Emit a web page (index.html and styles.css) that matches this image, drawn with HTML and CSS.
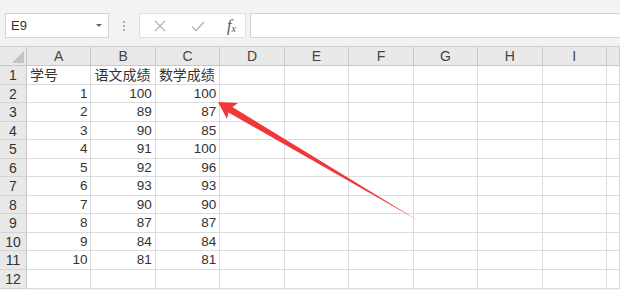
FILE: index.html
```html
<!DOCTYPE html>
<html lang="zh-CN">
<head>
    <meta charset="UTF-8">
    <link rel="stylesheet" href="styles.css">
    <title>表格</title>
</head>
<body>
    <!-- 编辑栏 -->
    <div class="toolbar">
        <div class="name-box">
            <span class="cell-ref">E9</span>
            <span class="caret"></span>
        </div>
        <div class="grip">
            <i></i><i></i><i></i>
        </div>
        <div class="fx-box">
            <svg class="tool-icon" width="14" height="14" viewBox="0 0 14 14">
                <path d="M2 2 L12 12 M12 2 L2 12" stroke="#b4b4b4" stroke-width="1.3" fill="none"/>
            </svg>
            <svg class="tool-icon" width="14" height="14" viewBox="0 0 14 14">
                <path d="M1 7.5 L5 11.5 L13 3" stroke="#b4b4b4" stroke-width="1.4" fill="none"/>
            </svg>
            <span class="fx">f<sub>x</sub></span>
        </div>
        <div class="formula-input"></div>
    </div>

    <!-- 工作表 -->
    <div class="sheet">
        <div class="grid" id="grid"></div>
        <svg class="arrow" width="620" height="290" viewBox="0 0 620 290">
            <polygon points="218,102 238,103 232.5,107 418,220.5 228.5,112.5 227,119" fill="#f0383a"/>
        </svg>
    </div>

    <script>
        var cols = ['A', 'B', 'C', 'D', 'E', 'F', 'G', 'H', 'I', ''];
        var data = [
            ['学号', '语文成绩', '数学成绩'],
            [1, 100, 100], [2, 89, 87], [3, 90, 85], [4, 91, 100], [5, 92, 96],
            [6, 93, 93], [7, 90, 90], [8, 87, 87], [9, 84, 84], [10, 81, 81],
            []
        ];
        var grid = document.getElementById('grid');
        var html = '<div class="corner"><span class="tri"></span></div>';
        cols.forEach(function(c) {
            html += '<div class="col-head">' + c + '</div>';
        });
        data.forEach(function(row, r) {
            html += '<div class="row-head">' + (r + 1) + '</div>';
            cols.forEach(function(c, i) {
                var v = row[i];
                if (v === undefined) {
                    html += '<div class="cell"></div>';
                } else if (typeof v === 'number') {
                    html += '<div class="cell num">' + v + '</div>';
                } else {
                    html += '<div class="cell text">' + v + '</div>';
                }
            });
        });
        grid.innerHTML = html;
    </script>
</body>
</html>
```

FILE: styles.css
```css
body {
    margin: 0;
    padding: 0;
    width: 620px;
    height: 290px;
    overflow: hidden;
    background: #f3f3f3;
    font-family: 'Liberation Sans', 'Noto Sans CJK SC', sans-serif;
    color: #333;
}

.toolbar {
    display: flex;
    align-items: center;
    height: 25px;
    padding: 13px 0 8px 5px;
    border-top: 2px solid #e6e6e6;
    box-sizing: content-box;
    margin-top: -2px;
}

.name-box {
    width: 100px;
    height: 23px;
    background: #fff;
    border: 1px solid #d4d4d4;
    display: flex;
    align-items: center;
    justify-content: space-between;
    padding: 0 6px 0 5px;
    box-sizing: content-box;
    margin-right: 0;
    width: 91px;
}
.cell-ref {
    font-size: 13px;
    color: #333;
}
.caret {
    width: 0;
    height: 0;
    border-left: 3px solid transparent;
    border-right: 3px solid transparent;
    border-top: 3px solid #666;
}

.grip {
    width: 30px;
    display: flex;
    flex-direction: column;
    align-items: center;
    gap: 2px;
}
.grip i {
    width: 2px;
    height: 2px;
    background: #b0b0b0;
}

.fx-box {
    width: 107px;
    height: 23px;
    background: #fff;
    border: 1px solid #e0e0e0;
    display: flex;
    align-items: center;
    padding-left: 13px;
    gap: 24px;
    box-sizing: border-box;
    height: 25px;
}
.fx {
    font-family: 'Liberation Serif', serif;
    font-style: italic;
    font-size: 16px;
    color: #555;
    margin-left: -2px;
}
.fx sub {
    font-size: 10px;
    vertical-align: -1px;
}

.formula-input {
    flex-grow: 1;
    height: 25px;
    margin-left: 4px;
    background: #fff;
    border: 1px solid #d4d4d4;
    border-right: none;
    box-sizing: border-box;
}

.sheet {
    position: relative;
    border-top: 1px solid #d0d0d0;
}

.grid {
    display: grid;
    grid-template-columns: 27px repeat(9, 64.45px) 1fr;
    grid-template-rows: 19px repeat(12, 18.55px);
    background: #fff;
}

.corner {
    background: #e9e9e9;
    border-right: 1px solid #c8c8c8;
    border-bottom: 1px solid #c8c8c8;
    position: relative;
}
.tri {
    position: absolute;
    right: 2px;
    bottom: 2px;
    width: 0;
    height: 0;
    border-left: 12px solid transparent;
    border-bottom: 12px solid #c4c4c4;
}

.col-head {
    background: #e9e9e9;
    border-right: 1px solid #cacaca;
    border-bottom: 1px solid #c8c8c8;
    font-size: 14px;
    text-align: center;
    line-height: 19px;
    color: #444;
}

.row-head {
    background: #e9e9e9;
    border-right: 1px solid #c8c8c8;
    border-bottom: 1px solid #d4d4d4;
    font-size: 14px;
    text-align: center;
    line-height: 18px;
    color: #333;
}

.cell {
    border-right: 1px solid #dcdcdc;
    border-bottom: 1px solid #dcdcdc;
    font-size: 13.5px;
    line-height: 18px;
    padding: 0 3px;
    white-space: nowrap;
    overflow: visible;
}
.num {
    text-align: right;
}
.text {
    font-size: 14px;
    padding-left: 3px;
}

.arrow {
    position: absolute;
    left: 0;
    top: -47px;
    pointer-events: none;
}
```
